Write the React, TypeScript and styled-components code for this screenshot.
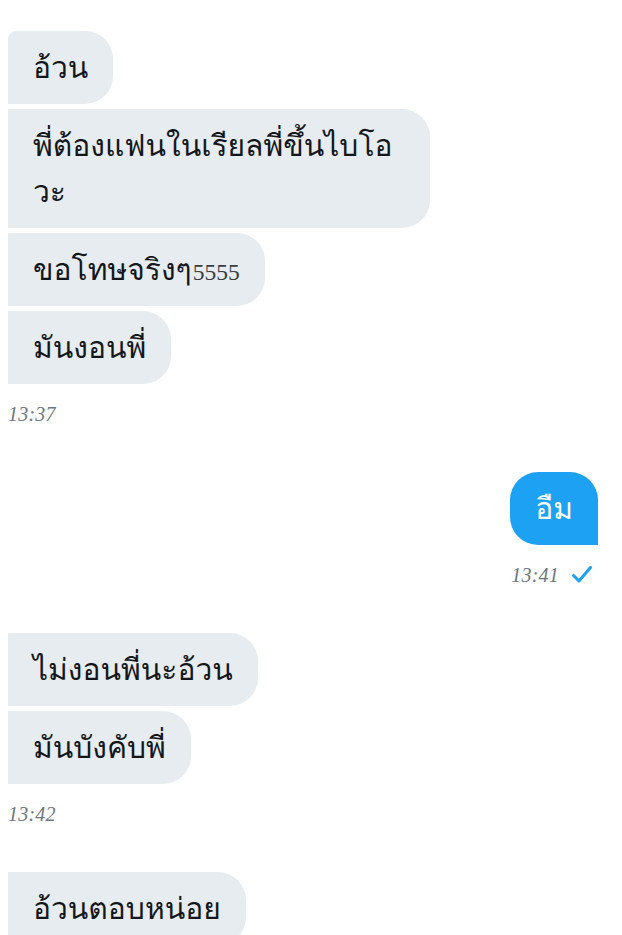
import React from "react";
import styled, { createGlobalStyle } from "styled-components";

const Global = createGlobalStyle`
  html, body { margin: 0; padding: 0; background: #ffffff; }
  body { font-family: "Liberation Serif", Loma, serif; }
`;

const Page = styled.div`
  width: 622px;
  min-height: 935px;
  box-sizing: border-box;
  padding: 31px 24px 0 8px;
  display: flex;
  flex-direction: column;
  gap: 46px;
  overflow: hidden;
`;

const Group = styled.div<{ $sent?: boolean }>`
  display: flex;
  flex-direction: column;
  align-items: ${(p) => (p.$sent ? "flex-end" : "flex-start")};
  gap: 5px;
`;

const Bubble = styled.div<{ $sent?: boolean; $first?: boolean }>`
  box-sizing: border-box;
  max-width: 422px;
  padding: 14px 25px 13px 25px;
  font-family: "Liberation Serif", Loma, serif;
  font-size: 30px;
  line-height: 46px;
  color: ${(p) => (p.$sent ? "#ffffff" : "#14171a")};
  background: ${(p) => (p.$sent ? "#1da1f2" : "#e6ecf0")};
  border-radius: ${(p) =>
    p.$sent ? "28px 28px 0 28px" : p.$first ? "8px 28px 28px 0" : "0 28px 28px 0"};
`;

const Digits = styled.span`
  font-size: 23.5px;
  line-height: 0;
  color: #3a3d40;
  margin-left: 1px;
`;

const Meta = styled.div<{ $sent?: boolean }>`
  margin-top: 13px;
  height: 24px;
  display: flex;
  align-items: center;
  gap: 12px;
  padding-right: ${(p) => (p.$sent ? "5px" : "0")};
`;

const Time = styled.span`
  font-family: "Liberation Serif", "DejaVu Serif", serif;
  font-style: italic;
  font-size: 20px;
  color: #6e767d;
  letter-spacing: 0.2px;
`;

const Check = () => (
  <svg width="22" height="20" viewBox="0 0 22 20" fill="none">
    <path
      d="M2.5 10.5 L8 16 L19.5 2.5"
      stroke="#1da1f2"
      strokeWidth="3"
      strokeLinecap="round"
      strokeLinejoin="round"
    />
  </svg>
);

export default function App() {
  return (
    <>
      <Global />
      <Page>
        <Group>
          <Bubble $first>อ้วน</Bubble>
          <Bubble>
            พี่ต้องแฟนในเรียลพี่ขึ้นไบโอ<wbr />วะ
          </Bubble>
          <Bubble>
            ขอโทษจริงๆ<Digits>5555</Digits>
          </Bubble>
          <Bubble>มันงอนพี่</Bubble>
          <Meta>
            <Time>13:37</Time>
          </Meta>
        </Group>
        <Group $sent>
          <Bubble $sent>อืม</Bubble>
          <Meta $sent>
            <Time>13:41</Time>
            <Check />
          </Meta>
        </Group>
        <Group>
          <Bubble>ไม่งอนพี่นะอ้วน</Bubble>
          <Bubble>มันบังคับพี่</Bubble>
          <Meta>
            <Time>13:42</Time>
          </Meta>
        </Group>
        <Group>
          <Bubble>อ้วนตอบหน่อย</Bubble>
        </Group>
      </Page>
    </>
  );
}
